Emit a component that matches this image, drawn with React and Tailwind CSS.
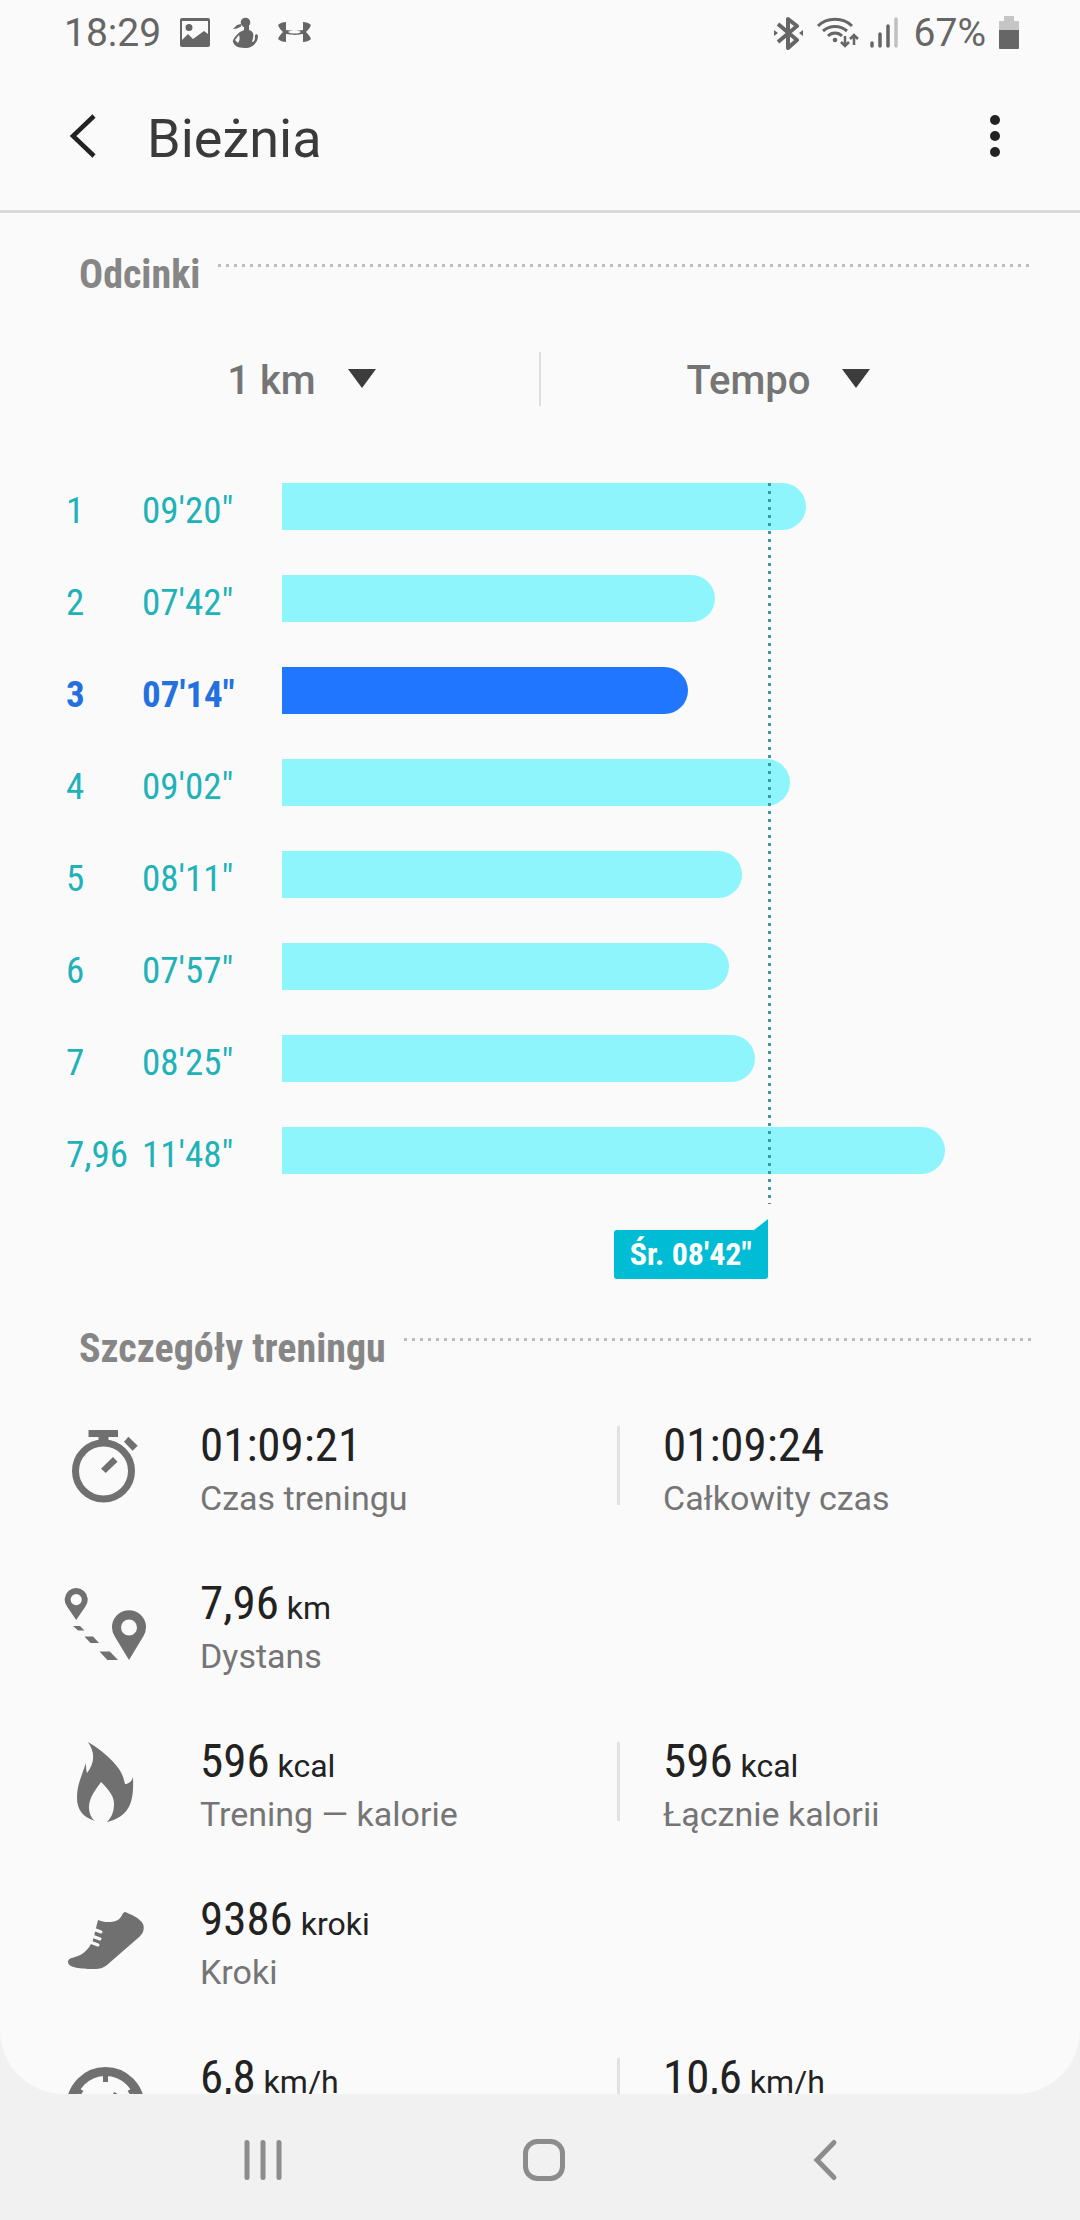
const segments = [
  { km: "1", pace: "09'20\"", seconds: 560 },
  { km: "2", pace: "07'42\"", seconds: 462 },
  { km: "3", pace: "07'14\"", seconds: 434, fastest: true },
  { km: "4", pace: "09'02\"", seconds: 542 },
  { km: "5", pace: "08'11\"", seconds: 491 },
  { km: "6", pace: "07'57\"", seconds: 477 },
  { km: "7", pace: "08'25\"", seconds: 505 },
  { km: "7,96", pace: "11'48\"", seconds: 708 },
];

const averageSeconds = 522;
const longest = Math.max(...segments.map((s) => s.seconds));

const details = [
  {
    icon: StopwatchIcon,
    cells: [
      { value: "01:09:21", label: "Czas treningu" },
      { value: "01:09:24", label: "Całkowity czas" },
    ],
  },
  { icon: RouteIcon, cells: [{ value: "7,96", unit: "km", label: "Dystans" }] },
  {
    icon: FlameIcon,
    cells: [
      { value: "596", unit: "kcal", label: "Trening — kalorie" },
      { value: "596", unit: "kcal", label: "Łącznie kalorii" },
    ],
  },
  { icon: ShoeIcon, cells: [{ value: "9386", unit: "kroki", label: "Kroki" }] },
  {
    icon: SpeedIcon,
    cells: [
      { value: "6,8", unit: "km/h" },
      { value: "10,6", unit: "km/h" },
    ],
  },
];

function StopwatchIcon() {
  return (
    <svg className="h-[84px] w-[84px]" viewBox="0 0 84 84" fill="currentColor" aria-hidden="true">
      <path d="M24.500 6h29.500v7h-9.500v6h-10v-6h-10z" />
      <circle cx="39.500" cy="47" r="28" fill="none" stroke="currentColor" strokeWidth="7" />
      <path d="M64.400 12.700l9.300 9-5.100 5-8.600-9z" />
      <path d="M49 33l4.500 4.700L41.700 49 37 44.700z" />
    </svg>
  );
}

function RouteIcon() {
  return (
    <svg className="h-[84px] w-[84px]" viewBox="0 0 84 84" fill="currentColor" fillRule="evenodd" aria-hidden="true">
      <path d="M12.200 38L3 24.500A11.500 11.500 0 1 1 21.400 24.500zM12.200 12a5.600 5.600 0 1 0 0 11.200 5.600 5.600 0 0 0 0-11.200z" />
      <path d="M65 78L50.500 54A17 17 0 1 1 79.500 54zM65 37.500a8 8 0 1 0 0 16 8 8 0 0 0 0-16z" />
      <path d="M9 44h7l4.500 4.500H14zM20.400 54.500H29l6 6.500h-8.500zM35.500 69.500h10.300L54 78H43.400z" />
    </svg>
  );
}

function FlameIcon() {
  return (
    <svg className="h-[84px] w-[84px]" viewBox="0 0 84 84" fill="currentColor" aria-hidden="true">
      <path d="M24 2C36 9 48 19 55 29C59 35 60 40 61 44C65 44 68 41 69 37C70 62 66 76 43 82C48 77 50 71 50 64C50 55 43 48 37 42C33 48 25 57 25 67C25 73 27 78 31 81C19 77 13 70 13 58C13 46 16 40 22 23C22 27 22 30 23 33C30 24 32 14 24 2z" />
    </svg>
  );
}

function ShoeIcon() {
  return (
    <svg className="h-[84px] w-[84px]" viewBox="0 0 84 84" fill="currentColor" aria-hidden="true">
      <path d="M4 64C4 59 12 60 18 56C25 51 27 46 29 42L34 22C40 25 53 25 56 20C58 18 59 14 61 14C66 16 76 20 79 26C81 31 79 36 74 40L43 67C38 71 34 71 28 71C18 71 4 70 4 64z" />
      <path d="M29 31l8 3M28 38l8 3M26 44l8 3" stroke="#fafafa" strokeWidth="3" strokeLinecap="round" />
    </svg>
  );
}

function SpeedIcon() {
  return (
    <svg className="h-[84px] w-[84px]" viewBox="0 0 84 84" fill="none" stroke="currentColor" aria-hidden="true">
      <circle cx="41.500" cy="50" r="34.500" strokeWidth="9" />
      <path d="M41.500 18v8M12 33l6 4M71 33l-6 4" strokeWidth="5" />
      <path d="M52 37L42 52" strokeWidth="4" />
    </svg>
  );
}

function StatusBar() {
  return (
    <div className="flex h-[66px] items-center justify-between pl-[64px] pr-[60px] text-[39px] leading-[66px] text-[#666]">
      <div className="flex items-center">
        <span>18:29</span>
        <svg className="ml-[18px] h-[34px] w-[134px]" viewBox="0 0 134 34" fill="currentColor" aria-hidden="true">
          <path
            fillRule="evenodd"
            d="M3 2h26a2 2 0 0 1 2 2v25a2 2 0 0 1-2 2H3a2 2 0 0 1-2-2V4a2 2 0 0 1 2-2zm0 3v19l6-6 5 5 11-8 4 3V5zM10 8a3.500 3.500 0 1 1 0 7 3.500 3.500 0 0 1 0-7z"
          />
          <circle cx="66.500" cy="6.500" r="4.800" />
          <path d="M62 8l-4 1-4 4 4-.5 4-2zM65 10h5v4c4 1 5 4 4 8l-1 4c2 0 3-2 3-5l0-2 2-1 1 2c0 6-5 12-13 12s-11-3-12-6c-1-2 4-8 7-10 1-1 3-1 4-2zM60 19l-4 5 3 3c2-3 2-5 1-8z" fillRule="evenodd" />
          <path d="M99 9c2-2 5-3 8-3v8l9 1 8-1V6c3 0 6 1 8 3-1 3-3 5-5 7 2 2 4 4 5 7-2 2-5 3-8 3v-8l-8 1-9-1v8c-3 0-6-1-8-3 1-3 3-5 5-7-2-2-4-4-5-7z" />
          <path d="M109 16c3-2 10-2 13 0-3 2-10 2-13 0z" fill="#fafafa" />
        </svg>
      </div>
      <div className="flex items-center">
        <svg className="h-[34px] w-[128px]" viewBox="0 0 128 34" fill="none" stroke="currentColor" aria-hidden="true">
          <path d="M5 8l19 16-9 8V3l9 7L5 26" strokeWidth="4" strokeLinejoin="round" />
          <path d="M1 14l4 3-4 3zM30 14l-4 3 4 3z" fill="currentColor" stroke="none" />
          <path d="M45 10c9-9 25-9 34 0M50 15c7-6 17-6 24 0M55 20c4-4 10-4 14 0" strokeWidth="3" />
          <circle cx="62" cy="24" r="2.300" fill="currentColor" stroke="none" />
          <path d="M72 20v10M68 26l4 4 4-4M81 29V19M77 23l4-4 4 4" strokeWidth="2.500" />
          <path d="M99 27v3M107 18v12M115 10v20" strokeWidth="3.500" strokeLinecap="round" />
          <path d="M123 3v27" stroke="#c0c0c0" strokeWidth="3.500" strokeLinecap="round" />
        </svg>
        <span className="ml-[13px]">67%</span>
        <svg className="ml-[12px] h-[34px] w-[22px]" viewBox="0 0 22 34" aria-hidden="true">
          <path d="M6 0h10v5h5v10H1V5h5z" fill="#c6c6c6" />
          <path d="M1 14h20v18a1 1 0 0 1-1 1H2a1 1 0 0 1-1-1z" fill="#666" />
        </svg>
      </div>
    </div>
  );
}

function SectionTitle({ children }) {
  return (
    <div className="flex items-start gap-[18px] pl-[79px] pr-[48px]">
      <h2 className="font-['Roboto_Condensed',Roboto,sans-serif] text-[40px] font-bold leading-[48px] text-[#868686]">
        {children}
      </h2>
      <div className="mt-[13px] h-[3px] flex-1 bg-[repeating-linear-gradient(to_right,#bdbdbd_0_3px,transparent_3px_8px)]" />
    </div>
  );
}

function Dropdown({ label, options }) {
  return (
    <div className="flex flex-1 justify-center">
      <div className="relative">
        <select
          aria-label={label}
          className="field-sizing-content appearance-none bg-transparent pr-[60px] pt-[4px] text-[40px] font-medium leading-[50px] text-[#757575]"
        >
          {options.map((option) => (
            <option key={option}>{option}</option>
          ))}
        </select>
        <svg
          className="pointer-events-none absolute right-0 top-[17px] h-[19px] w-[28px]"
          viewBox="0 0 28 19"
          fill="#3c3c3c"
          aria-hidden="true"
        >
          <path d="M0 0h28L14 19z" />
        </svg>
      </div>
    </div>
  );
}

function SegmentChart() {
  return (
    <div className="mt-[77px] pl-[66px] pr-[135px]">
      <div className="relative">
        <ol className="flex flex-col gap-[45px]">
          {segments.map((s) => (
            <li
              key={s.km}
              className={`flex items-center font-['Roboto_Condensed',Roboto,sans-serif] text-[37px] leading-[39px] ${
                s.fastest ? "font-bold text-[#2470de]" : "text-[#20b2b8]"
              }`}
            >
              <span className="w-[76px] pt-[8px]">{s.km}</span>
              <span className="w-[140px] pt-[8px]">{s.pace}</span>
              <div className="flex-1">
                <div
                  className={`h-[47px] rounded-r-full ${s.fastest ? "bg-[#2176ff]" : "bg-[#8df5fb]"}`}
                  style={{ width: `${(s.seconds / longest) * 100}%` }}
                />
              </div>
            </li>
          ))}
        </ol>

        {/* Average pace marker */}
        <div className="pointer-events-none absolute -bottom-[105px] left-[216px] right-0 top-0">
          <div
            className="flex h-full flex-col items-end"
            style={{ width: `${(averageSeconds / longest) * 100}%` }}
          >
            <div className="w-[3px] flex-1 bg-[repeating-linear-gradient(to_bottom,#3a9ba3_0_3px,transparent_3px_8px)]" />
            <div className="mt-[15px] flex flex-col items-end pr-[3px]">
              <svg className="h-[11px] w-[14px]" viewBox="0 0 14 11" fill="#00bcd4" aria-hidden="true">
                <path d="M14 0v11H0z" />
              </svg>
              <div className="rounded-[3px] rounded-tr-none bg-[#00bcd4] px-[16px] font-['Roboto_Condensed',Roboto,sans-serif] text-[32px] font-bold leading-[49px] text-white">
                Śr. 08'42"
              </div>
            </div>
          </div>
        </div>
      </div>
    </div>
  );
}

function DetailCell({ value, unit, label }) {
  return (
    <div>
      <p className="font-['Roboto_Condensed',Roboto,sans-serif] text-[47px] leading-[60px] text-[#222]">
        {value}
        {unit && <span className="font-[Roboto,sans-serif] text-[32px] leading-none"> {unit}</span>}
      </p>
      {label && <p className="text-[34px] leading-[46px] text-[#757575]">{label}</p>}
    </div>
  );
}

export default function App() {
  return (
    <div className="flex h-screen flex-col bg-[#f1f1f1] font-[Roboto,sans-serif]">
      <div className="min-h-0 flex-1 overflow-hidden rounded-b-[64px] bg-[#fafafa]">
        <StatusBar />

        <header className="flex h-[147px] items-center border-b-[3px] border-[#d9d9d9] pb-[4px] pl-[64px] pr-[64px]">
          <button type="button" aria-label="Wstecz" className="h-[44px] w-[38px]">
            <svg className="h-[44px] w-[38px]" viewBox="0 0 38 44" fill="none" stroke="#222" strokeWidth="4.500" aria-hidden="true">
              <path d="M30 2L9 22l21 20" />
            </svg>
          </button>
          <h1 className="ml-[45px] flex-1 pt-[5px] text-[54px] leading-[72px] text-[#3a3a3a]">Bieżnia</h1>
          <button type="button" aria-label="Więcej opcji" className="h-[44px] w-[42px]">
            <svg className="h-[44px] w-[42px]" viewBox="0 0 42 44" fill="#222" aria-hidden="true">
              <circle cx="21" cy="6" r="5" />
              <circle cx="21" cy="22" r="5" />
              <circle cx="21" cy="38" r="5" />
            </svg>
          </button>
        </header>

        <section className="pt-[38px]">
          <SectionTitle>Odcinki</SectionTitle>
          <div className="mt-[53px] flex items-center px-[64px]">
            <Dropdown label="Długość odcinka" options={["1 km"]} />
            <div className="h-[54px] w-[2px] bg-[#dedede]" />
            <Dropdown label="Wartość" options={["Tempo"]} />
          </div>
          <SegmentChart />
        </section>

        <section className="pt-[151px]">
          <SectionTitle>Szczegóły treningu</SectionTitle>
          <div className="mt-[42px] flex flex-col gap-[52px] pl-[64px] pr-[46px]">
            {details.map(({ icon: Icon, cells }, i) => (
              <div key={i} className="grid grid-cols-[136px_1fr_1fr]">
                <div className="pt-[9px] text-[#707070]">
                  <Icon />
                </div>
                <DetailCell {...cells[0]} />
                {cells[1] && (
                  <div className="flex gap-[43px]">
                    <div className="mt-[11px] h-[79px] w-[3px] bg-[#e2e2e2]" />
                    <DetailCell {...cells[1]} />
                  </div>
                )}
              </div>
            ))}
          </div>
        </section>
      </div>

      <nav className="grid h-[126px] shrink-0 grid-cols-3 items-center justify-items-center pb-[1px] pl-[122px] pr-[115px] pt-[6px] text-[#8c8c8c]">
        <button type="button" aria-label="Ostatnie aplikacje">
          <svg className="h-[44px] w-[44px]" viewBox="0 0 44 44" stroke="currentColor" strokeWidth="5" strokeLinecap="round" aria-hidden="true">
            <path d="M6 4.500v35M22 4.500v35M38 4.500v35" />
          </svg>
        </button>
        <button type="button" aria-label="Ekran główny">
          <svg className="h-[44px] w-[44px]" viewBox="0 0 44 44" fill="none" stroke="currentColor" strokeWidth="5" aria-hidden="true">
            <rect x="3.500" y="3.500" width="37" height="37" rx="12" />
          </svg>
        </button>
        <button type="button" aria-label="Cofnij">
          <svg className="h-[44px] w-[44px]" viewBox="0 0 44 44" fill="none" stroke="currentColor" strokeWidth="5" strokeLinecap="round" aria-hidden="true">
            <path d="M31 4.500L14 22l17 17.500" />
          </svg>
        </button>
      </nav>
    </div>
  );
}
